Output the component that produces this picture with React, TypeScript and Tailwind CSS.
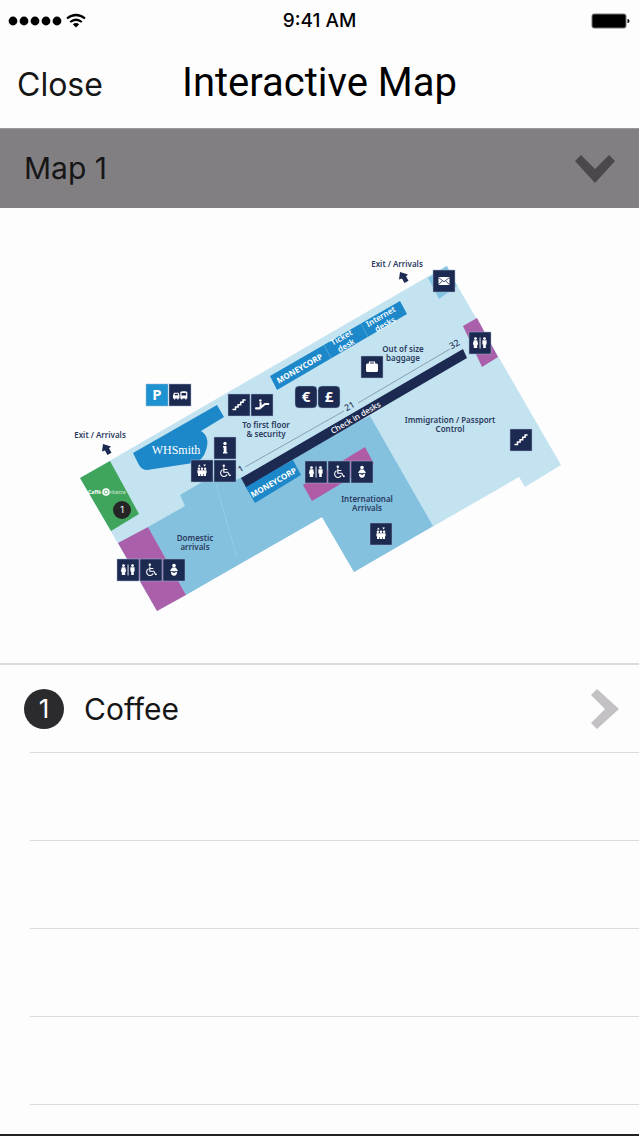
import React, { useState } from 'react';

type GlyphName = 'wc' | 'wheelchair' | 'baby' | 'lift' | 'stairs' | 'escalator' | 'info' | 'bag' | 'mail' | 'cars';

interface TileProps {
  x: number;
  y: number;
  glyph?: GlyphName;
  label?: string;
  fill?: string;
  rounded?: boolean;
}

interface MapLabelProps {
  x: number;
  y: number;
  lines: string[];
  size?: number;
  fill?: string;
  angle?: number;
  weight?: number;
}

const NAVY = '#1c2951';
const MAP_FONT = '"Noto Sans", "Open Sans", sans-serif';

// every glyph is drawn on a 22 x 22 grid
const glyphs: Record<GlyphName, React.ReactNode> = {
  wc: (
    <g>
      <circle cx="6.5" cy="6.6" r="1.4" />
      <path d="M4.8 8.3h3.4l1 4.2-1 .3v3.2H4.8v-3.2l-1-.3z" />
      <rect x="10.6" y="5.5" width="0.9" height="11" />
      <circle cx="15.5" cy="6.6" r="1.4" />
      <path d="M13.4 8.3h4.2v4.2h-.8V16h-2.6v-3.5h-.8z" />
    </g>
  ),
  wheelchair: (
    <g>
      <circle cx="9.8" cy="5.8" r="1.2" />
      <path d="M9.8 7.5v4.7h4l1.8 3.4 1.3-.5M10 9.5h3.4M8.6 9.8a3.5 3.5 0 1 0 4.6 4.8" fill="none" stroke="white" strokeWidth="1.1" />
    </g>
  ),
  baby: (
    <g>
      <circle cx="11" cy="6.6" r="1.8" />
      <path d="M9.4 8.6h3.2l2.4 2.8-1 .8-1.2-.8v.8H9.2v-.8l-1.2.8-1-.8z" />
      <path d="M8 12.6l3 1.4 3-1.4c.4 2.600-1 4.200-3 4.200s-3.400-1.600-3-4.200z" />
    </g>
  ),
  lift: (
    <g>
      <path d="M8.4 4.5l1.4 2H7zM13.600 6.500l-1.400-2h2.800z" />
      <circle cx="7.900" cy="8.800" r="1.200" />
      <circle cx="11" cy="8.800" r="1.200" />
      <circle cx="14.100" cy="8.800" r="1.200" />
      <path d="M6.400 10.200h9.200v3h-.6V16h-2.200v-2h-.6v2h-2.400v-2h-.6v2H7v-2.800h-.6z" />
    </g>
  ),
  stairs: (
    <path d="M4.5 15.500h3v-2.400h2.600v-2.400h2.600V8.300h2.400V6h2.500" fill="none" stroke="white" strokeWidth="1.500" />
  ),
  escalator: (
    <g>
      <path d="M5 14.300h3.500L14 10h3.300" fill="none" stroke="white" strokeWidth="2.200" strokeLinecap="round" />
      <circle cx="9.400" cy="6.500" r="1.200" />
      <path d="M8.600 8.300h2v3.400l-2 1.600z" />
    </g>
  ),
  info: (
    <g>
      <circle cx="11" cy="6.500" r="1.700" />
      <path d="M9 9h3.500v6h.8v1.500H9V15h.7v-4.500H9z" />
    </g>
  ),
  bag: (
    <g>
      <rect x="5" y="7.500" width="12" height="8.500" rx="1.500" />
      <path d="M8.500 8V6h5v2" fill="none" stroke="white" strokeWidth="1.200" />
    </g>
  ),
  mail: (
    <g>
      <rect x="5.500" y="7" width="11" height="8" />
      <path d="M5.500 7.500l5.500 4.300 5.500-4.300M5.500 14.800l3.800-4M16.500 14.800l-3.800-4" fill="none" stroke="#1c2951" strokeWidth="0.8" />
    </g>
  ),
  cars: (
    <g>
      <path d="M4 11.500l1-2.700h4.500l1 2.700v3h-1v1H8.300v-1H6.200v1H5v-1H4z" />
      <path d="M11.300 14.500V8.200c0-1.300 7-1.300 7 0v6.300h-.8v1h-1.200v-1h-3v1h-1.200v-1z" />
      <path d="M5.400 11.200l.6-1.400h2.600l.6 1.400zM12.500 9h4.600v2.500h-4.600z" fill="#1c2951" />
    </g>
  ),
};

const tiles: TileProps[] = [
  { x: 146, y: 384, label: 'P', fill: '#1f93d1' },
  { x: 169, y: 384, glyph: 'cars' },
  { x: 228, y: 394, glyph: 'stairs' },
  { x: 251, y: 394, glyph: 'escalator' },
  { x: 295, y: 386, label: '€', rounded: true },
  { x: 318, y: 386, label: '£', rounded: true },
  { x: 361, y: 356, glyph: 'bag' },
  { x: 433, y: 270, glyph: 'mail' },
  { x: 469, y: 332, glyph: 'wc' },
  { x: 510, y: 429, glyph: 'stairs' },
  { x: 214, y: 437, glyph: 'info' },
  { x: 191, y: 460, glyph: 'lift' },
  { x: 214, y: 460, glyph: 'wheelchair' },
  { x: 305, y: 461, glyph: 'wc' },
  { x: 328, y: 461, glyph: 'wheelchair' },
  { x: 351, y: 461, glyph: 'baby' },
  { x: 370, y: 523, glyph: 'lift' },
  { x: 117, y: 559, glyph: 'wc' },
  { x: 140, y: 559, glyph: 'wheelchair' },
  { x: 163, y: 559, glyph: 'baby' },
];

const labels: MapLabelProps[] = [
  { x: 397, y: 267, lines: ['Exit / Arrivals'] },
  { x: 100, y: 438, lines: ['Exit / Arrivals'] },
  { x: 403, y: 352, lines: ['Out of size', 'baggage'] },
  { x: 266, y: 428, lines: ['To first floor', '& security'] },
  { x: 450, y: 423, lines: ['Immigration / Passport', 'Control'] },
  { x: 367, y: 502, lines: ['International', 'Arrivals'] },
  { x: 195, y: 541, lines: ['Domestic', 'arrivals'] },
  { x: 301, y: 371, lines: ['MONEYCORP'], fill: 'white', angle: -30, weight: 700 },
  { x: 275, y: 485, lines: ['MONEYCORP'], fill: 'white', angle: -30, weight: 700 },
  { x: 343, y: 340, lines: ['Ticket', 'desk'], fill: 'white', angle: -30 },
  { x: 382, y: 319, lines: ['Internet', 'desks'], fill: 'white', angle: -30 },
  { x: 357, y: 420, lines: ['Check in desks'], fill: 'white', angle: -30, weight: 500 },
  { x: 242, y: 471, lines: ['1'], angle: -30 },
  { x: 351, y: 409, lines: ['21'], angle: -30, size: 9, weight: 500 },
  { x: 456, y: 347, lines: ['32'], angle: -30, size: 9, weight: 500 },
];

const Tile: React.FC<TileProps> = ({ x, y, glyph, label, fill = NAVY, rounded }) => (
  <g transform={`translate(${x} ${y})`} fill="white">
    <rect width="22" height="22" rx={rounded ? 4 : 0} fill={fill} stroke="#9fb9d3" strokeWidth="0.5" />
    {glyph && glyphs[glyph]}
    {label && (
      <text x="11" y="16" textAnchor="middle" fontFamily={MAP_FONT} fontSize="15" fontWeight="700">
        {label}
      </text>
    )}
  </g>
);

const MapLabel: React.FC<MapLabelProps> = ({ x, y, lines, size = 8, fill = '#2c3a5e', angle = 0, weight = 600 }) => (
  <text
    transform={`translate(${x} ${y}) rotate(${angle})`}
    textAnchor="middle"
    fontFamily={MAP_FONT}
    fontSize={size}
    fontWeight={weight}
    fill={fill}
  >
    {lines.map((line, i) => (
      <tspan key={line} x="0" y={i * 9}>
        {line}
      </tspan>
    ))}
  </text>
);

const ExitArrow: React.FC<{ x: number; y: number }> = ({ x, y }) => (
  <path
    transform={`translate(${x} ${y})`}
    d="M1 0L9 2.500L7 4.200L9.500 8.800L5.500 11L3 6.500L0 7.500z"
    fill={NAVY}
  />
);

const TerminalMap: React.FC = () => (
  <svg viewBox="0 208 639 455" className="block w-full" role="img" aria-label="Terminal map">
    {/* building */}
    <path d="M80 478L446 266L561 465L525 487L519 477L354 572L322 517L157 611z" fill="#c3e3f0" />
    <path d="M148 527L185 506L180 495L209 478L234 481L370 416L433 526L354 572L322 517L186 595z" fill="#83c1df" />
    <path d="M216 484L237 558" stroke="#a3d2e8" strokeWidth="0.6" />
    <path d="M428 278L447 266L457 286L439 299z" fill="#83c4e2" />

    {/* toilets */}
    <path d="M118 543L148 527L186 595L157 611z" fill="#a95fa9" />
    <path d="M303 485L365 447L374 464L312 501z" fill="#b05ba5" />
    <path d="M463 326L477 318L498 357L482 367z" fill="#a95fa9" />

    {/* shops and desks */}
    <path d="M80 478L110 461L139 514L111 531z" fill="#3fa55c" />
    <path d="M133 453L217 405L224 417L201 431C209 436 208 444 206 450Q203 461 193 463L147 470Q142 470 139 465z" fill="#1c87c9" />
    <path d="M270 376L400 301L407 314L277 390z" fill="#1c87c9" />
    <path d="M324 345L331 358M361 324L368 337" stroke="#5fb1de" strokeWidth="0.7" />
    <path d="M245 486L293 460L301 475L255 503z" fill="#1c87c9" />
    <path d="M241 478L463 349L467 358L246 487z" fill={NAVY} />
    <path d="M245 467L344 411M358 403L450 349" stroke="#77919f" strokeWidth="0.8" />

    <ExitArrow x={399} y={272} />
    <ExitArrow x={102} y={444} />

    <text x="176" y="454" textAnchor="middle" fontFamily='"Liberation Serif", serif' fontSize="12" fill="white">
      WHSmith
    </text>
    <g fontFamily={MAP_FONT} fontSize="5" fill="white">
      <text x="88" y="494" fontWeight="700">Caffè</text>
      <circle cx="106" cy="492" r="3.8" />
      <circle cx="106" cy="492" r="1.8" fill="none" stroke="#3fa55c" strokeWidth="0.7" />
      <text x="110" y="494" opacity="0.8">ritazza</text>
    </g>

    {tiles.map((tile) => (
      <Tile key={`${tile.x}-${tile.y}`} {...tile} />
    ))}
    {labels.map((label) => (
      <MapLabel key={`${label.x}-${label.y}`} {...label} />
    ))}

    {/* point of interest */}
    <circle cx="122" cy="510" r="9" fill="#252525" />
    <text x="122" y="513" textAnchor="middle" fontFamily="Inter, sans-serif" fontSize="9" fill="white">1</text>
  </svg>
);

const StatusBar: React.FC = () => (
  <div className="grid h-[42px] grid-cols-3 items-center px-2 text-black">
    <div className="flex items-center gap-1">
      <svg className="h-3 w-[54px]" viewBox="0 0 54 12" fill="currentColor">
        {[5, 16, 27, 38, 49].map((cx) => (
          <circle key={cx} cx={cx} cy="6" r="4.4" />
        ))}
      </svg>
      <svg className="h-4 w-5" viewBox="0 0 20 16" fill="none" stroke="currentColor" strokeWidth="2.2">
        <path d="M1 5.500Q10-1.500 19 5.500M4.200 9Q10 4.500 15.800 9" />
        <path d="M6.800 11.300Q10 8.800 13.200 11.300L10 14.500z" fill="currentColor" stroke="none" />
      </svg>
    </div>
    <span className="text-center text-[19px] font-medium">9:41 AM</span>
    <svg className="h-4 w-10 justify-self-end" viewBox="0 0 40 16">
      <rect x="1" y="1" width="34" height="14" rx="2" fill="black" stroke="#777" />
      <path d="M36.500 6q2 0 2 2t-2 2z" fill="black" />
    </svg>
  </div>
);

const App: React.FC = () => {
  const [map, setMap] = useState('Map 1');

  return (
    <div className="flex min-h-screen flex-col border-b-2 border-[#222] bg-[#fefdfe] font-[Inter,sans-serif] text-[#161616]">
      <StatusBar />

      <header className="grid h-[86px] grid-cols-[1fr_auto_1fr] items-center px-[17px]">
        <button className="justify-self-start text-[32px] leading-10">Close</button>
        <h1 className="pb-1 font-[Roboto,sans-serif] text-[40px] leading-10 text-black">Interactive Map</h1>
      </header>

      <div className="grid h-20 items-center border-t border-[#9a999a] bg-[#817f81]">
        <select
          aria-label="Map"
          value={map}
          onChange={(e) => setMap(e.target.value)}
          className="col-start-1 row-start-1 h-full w-full appearance-none bg-transparent px-6 text-[30px] outline-none"
        >
          <option>Map 1</option>
        </select>
        <svg className="pointer-events-none col-start-1 row-start-1 mr-6 h-7 w-10 justify-self-end" viewBox="0 0 40 28">
          <path d="M6 0L20 14L34 0L40 6L20 28L0 6z" fill="#4a484b" />
        </svg>
      </div>

      <main className="flex flex-1 flex-col">
        <TerminalMap />

        <ul className="border-t-2 border-[#dcdadf]">
          <li>
            <button className="flex h-[87px] w-full items-center gap-5 px-6 text-left">
              <span className="flex size-10 items-center justify-center rounded-full bg-[#2b2a2c] text-[26px] leading-10 text-white">1</span>
              <span className="flex-1 text-[30px] leading-10">Coffee</span>
              <svg className="-mr-1 h-10 w-7" viewBox="0 0 28 40">
                <path d="M6 0L28 20L6 40L0 34L14 20L0 6z" fill="#c3c1c4" />
              </svg>
            </button>
          </li>
          {[1, 2, 3, 4].map((row) => (
            <li key={row} className="ml-[30px] h-22 border-t border-[#dcdadf]"></li>
          ))}
          <li className="ml-[30px] border-t border-[#dcdadf]"></li>
        </ul>
      </main>
    </div>
  );
};

export default App;
